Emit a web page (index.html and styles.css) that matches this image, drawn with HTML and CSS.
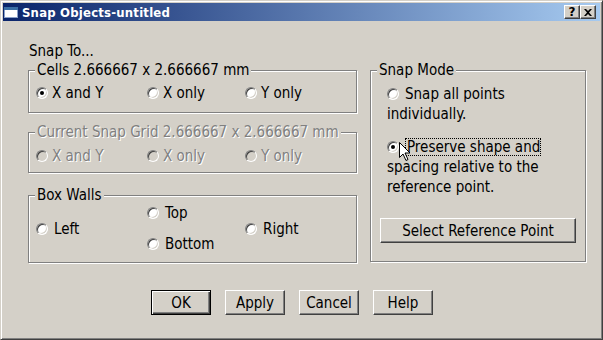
FILE: index.html
```html
<!DOCTYPE html>
<html lang="en">
<head>
<meta charset="UTF-8">
<title>Snap Objects-untitled</title>
<link rel="stylesheet" href="styles.css">
</head>
<body>
<div class="window">
    <div class="titlebar">
        <svg class="title-icon" width="14" height="11" viewBox="0 0 14 11">
            <rect x="0.5" y="0.5" width="13" height="10" fill="#fff" stroke="#8aa0c8"/>
            <rect x="0" y="0" width="14" height="3" fill="#3a6ea5"/>
        </svg>
        <span class="title-text">Snap Objects-untitled</span>
        <div class="caption-buttons">
            <span class="cap-btn">?</span>
            <span class="cap-btn">
                <svg width="8" height="7" viewBox="0 0 8 7">
                    <path d="M0 0h2l2 2 2-2h2L5 3.5 8 7H6L4 5 2 7H0l3-3.5z" fill="#000"/>
                </svg>
            </span>
        </div>
    </div>

    <div class="content">
        <div class="main">
            <div class="left">
                <div class="heading">Snap To...</div>

                <fieldset class="group cells">
                    <legend>Cells 2.666667 x 2.666667 mm</legend>
                    <div class="row3">
                        <label class="opt"><span class="radio checked"></span>X and Y</label>
                        <label class="opt"><span class="radio"></span>X only</label>
                        <label class="opt"><span class="radio"></span>Y only</label>
                    </div>
                </fieldset>

                <fieldset class="group grid disabled">
                    <legend>Current Snap Grid 2.666667 x 2.666667 mm</legend>
                    <div class="row3">
                        <label class="opt"><span class="radio"></span>X and Y</label>
                        <label class="opt"><span class="radio"></span>X only</label>
                        <label class="opt"><span class="radio"></span>Y only</label>
                    </div>
                </fieldset>

                <fieldset class="group walls">
                    <legend>Box Walls</legend>
                    <div class="walls-grid">
                        <label class="opt wide wall-left"><span class="radio"></span>Left</label>
                        <label class="opt wide wall-top"><span class="radio"></span>Top</label>
                        <label class="opt wide wall-bottom"><span class="radio"></span>Bottom</label>
                        <label class="opt wide wall-right"><span class="radio"></span>Right</label>
                    </div>
                </fieldset>
            </div>

            <div class="right">
                <fieldset class="group mode">
                    <legend>Snap Mode</legend>
                    <p class="mode-opt"><span class="radio"></span>Snap all points individually.</p>
                    <p class="mode-opt second"><span class="radio checked"></span><span class="focus">Preserve shape and</span> spacing relative to the reference point.</p>
                    <button class="btn ref-btn">Select Reference Point</button>
                </fieldset>
            </div>
        </div>

        <div class="actions">
            <button class="btn default">OK</button>
            <button class="btn">Apply</button>
            <button class="btn">Cancel</button>
            <button class="btn">Help</button>
        </div>
    </div>

    <!-- mouse pointer sitting over the selected radio -->
    <svg class="pointer" width="13" height="20" viewBox="0 0 13 20">
        <path d="M0.5 0.5v15l3.5-3.5 3 6.5 2-1-3-6.5h5z" fill="#fff" stroke="#000" stroke-width="1"/>
    </svg>
</div>
</body>
</html>
```

FILE: styles.css
```css
body {
    margin: 0;
    font-family: "DejaVu Sans", sans-serif;
    font-stretch: condensed;
    font-size: 15px;
    color: #000;
    background: #d4d0c8;
}

.window {
    position: relative;
    box-sizing: border-box;
    width: 603px;
    height: 340px;
    padding: 2px;
    background: #d4d0c8;
    border: 1px solid;
    border-color: #d4d0c8 #404040 #404040 #d4d0c8;
    box-shadow: inset 1px 1px #fff, inset -1px -1px #808080;
    display: flex;
    flex-direction: column;
}

/* title bar */
.titlebar {
    height: 18px;
    display: flex;
    align-items: center;
    padding: 0 4px 0 1px;
    background: linear-gradient(to right, #0a246a, #a6caf0);
}

.title-icon {
    display: block;
    margin-right: 4px;
}

.title-text {
    color: #fff;
    font-weight: bold;
    font-size: 13px;
    letter-spacing: 0.2px;
    flex: 1;
}

.caption-buttons {
    display: flex;
}

.cap-btn {
    box-sizing: border-box;
    width: 16px;
    height: 14px;
    display: flex;
    align-items: center;
    justify-content: center;
    background: #d4d0c8;
    border: 1px solid;
    border-color: #fff #404040 #404040 #fff;
    box-shadow: inset -1px -1px #808080;
    font-weight: bold;
    font-size: 12px;
    font-stretch: normal;
    line-height: 12px;
}

/* dialog body */
.content {
    flex: 1;
    padding: 22px 0 0 25px;
}

.main {
    display: flex;
    gap: 13px;
}

.left {
    width: 329px;
}

.heading {
    line-height: 16px;
    margin-bottom: 3px;
    padding-left: 1px;
}

.right {
    width: 216px;
    padding-top: 19px;
}

.group {
    margin: 0;
    padding: 0;
    min-width: 0;
    border: 1px solid #808080;
    box-shadow: inset 1px 1px #fff, 1px 1px #fff;
}

.group legend {
    margin-left: 6px;
    padding: 0 2px;
    line-height: 16px;
    background: #d4d0c8;
}

.cells {
    padding: 7px 0 11px;
}

.grid {
    margin-top: 11px;
    padding: 8px 0 8px;
}

.walls {
    margin-top: 14px;
    padding: 2px 0 10px;
}

.row3 {
    display: grid;
    grid-template-columns: 111px 98px auto;
    padding-left: 7px;
    line-height: 16px;
}

.opt {
    display: flex;
    align-items: center;
    gap: 4px;
    white-space: nowrap;
}

.opt.wide {
    gap: 6px;
}

.walls-grid {
    display: grid;
    grid-template-columns: 111px 98px auto;
    grid-template-rows: 16px 16px;
    row-gap: 15px;
    padding-left: 7px;
    line-height: 16px;
}

.wall-left {
    grid-column: 1;
    grid-row: 1 / 3;
}

.wall-top {
    grid-column: 2;
    grid-row: 1;
}

.wall-bottom {
    grid-column: 2;
    grid-row: 2;
}

.wall-right {
    grid-column: 3;
    grid-row: 1 / 3;
}

/* radio buttons, classic look */
.radio {
    position: relative;
    flex: none;
    box-sizing: border-box;
    display: inline-block;
    width: 12px;
    height: 12px;
    border-radius: 50%;
    background: #fff;
    border: 1px solid;
    border-color: #808080 #fff #fff #808080;
    box-shadow: inset 1px 1px #404040, inset -1px -1px #d4d0c8;
}

.radio.checked::after {
    content: "";
    position: absolute;
    left: 3px;
    top: 3px;
    width: 4px;
    height: 4px;
    border-radius: 50%;
    background: #000;
}

.disabled legend,
.disabled .opt {
    color: #808080;
    text-shadow: 1px 1px #fff;
}

.disabled .radio {
    background: #d4d0c8;
}

/* snap mode */
.mode {
    padding: 6px 8px 18px 0;
}

.mode-opt {
    margin: 0 0 0 16px;
    width: 175px;
    line-height: 20px;
}

.mode-opt .radio {
    vertical-align: -1px;
    margin-right: 6px;
}

.mode-opt.second {
    margin-top: 13px;
}

.focus {
    outline: 1px dotted #000;
    outline-offset: -1px;
    padding: 0 1px 0 2px;
}

/* buttons */
.btn {
    box-sizing: border-box;
    width: 60px;
    height: 25px;
    padding: 0;
    font: inherit;
    color: #000;
    background: #d4d0c8;
    border: 1px solid;
    border-color: #fff #404040 #404040 #fff;
    box-shadow: inset -1px -1px #808080;
}

.btn.default {
    border-color: #000;
    box-shadow: inset 1px 1px #fff, inset -1px -1px #404040, inset -2px -2px #808080;
}

.ref-btn {
    display: block;
    width: 196px;
    margin: 21px 0 0 9px;
}

.actions {
    display: flex;
    gap: 14px;
    margin-top: 27px;
    padding-left: 123px;
}

.pointer {
    position: absolute;
    left: 398px;
    top: 141px;
}
```
